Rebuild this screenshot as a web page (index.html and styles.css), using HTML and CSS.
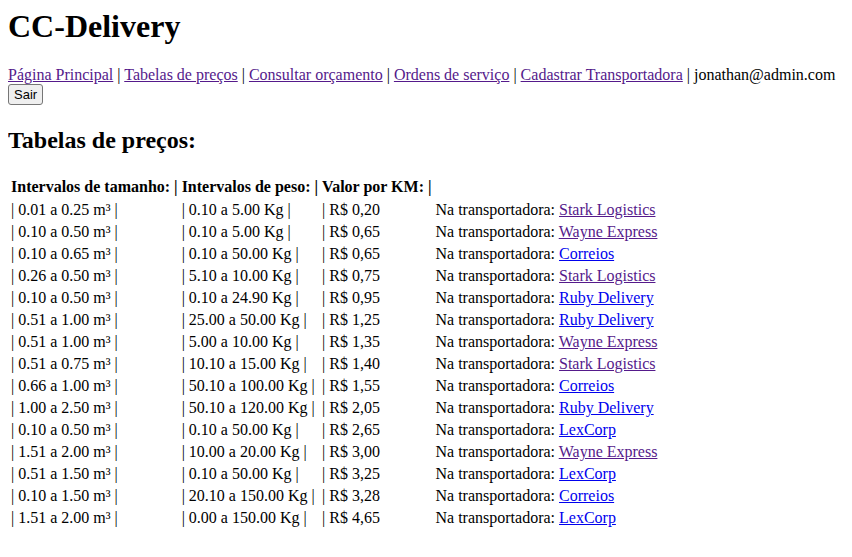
FILE: index.html
```html
<!DOCTYPE html>
<html lang="pt-BR">
<head>
<meta charset="utf-8">
<title>CC-Delivery</title>
<link rel="stylesheet" href="styles.css">
</head>
<body class="page">
<header class="site-header">
  <h1 class="brand">CC-Delivery</h1>
  <nav class="main-nav">
    <a class="link visited" href="#">Página Principal</a> | <a class="link visited" href="#">Tabelas de preços</a> | <a class="link visited" href="#">Consultar orçamento</a> | <a class="link visited" href="#">Ordens de serviço</a> | <a class="link visited" href="#">Cadastrar Transportadora</a> | jonathan@admin.com
  </nav>
  <form class="logout-form">
    <button class="btn-logout" type="button">Sair</button>
  </form>
</header>
<main>
  <h2 class="section-title">Tabelas de preços:</h2>
  <table class="price-table">
    <thead>
      <tr><th>Intervalos de tamanho: |</th><th>Intervalos de peso: |</th><th>Valor por KM: |</th><th></th></tr>
    </thead>
    <tbody>
      <tr><td>| 0.01 a 0.25 m³ |</td><td>| 0.10 a 5.00 Kg |</td><td>| R$ 0,20</td><td>Na transportadora: <a class="link visited" href="#">Stark Logistics</a></td></tr>
      <tr><td>| 0.10 a 0.50 m³ |</td><td>| 0.10 a 5.00 Kg |</td><td>| R$ 0,65</td><td>Na transportadora: <a class="link visited" href="#">Wayne Express</a></td></tr>
      <tr><td>| 0.10 a 0.65 m³ |</td><td>| 0.10 a 50.00 Kg |</td><td>| R$ 0,65</td><td>Na transportadora: <a class="link" href="#">Correios</a></td></tr>
      <tr><td>| 0.26 a 0.50 m³ |</td><td>| 5.10 a 10.00 Kg |</td><td>| R$ 0,75</td><td>Na transportadora: <a class="link visited" href="#">Stark Logistics</a></td></tr>
      <tr><td>| 0.10 a 0.50 m³ |</td><td>| 0.10 a 24.90 Kg |</td><td>| R$ 0,95</td><td>Na transportadora: <a class="link" href="#">Ruby Delivery</a></td></tr>
      <tr><td>| 0.51 a 1.00 m³ |</td><td>| 25.00 a 50.00 Kg |</td><td>| R$ 1,25</td><td>Na transportadora: <a class="link" href="#">Ruby Delivery</a></td></tr>
      <tr><td>| 0.51 a 1.00 m³ |</td><td>| 5.00 a 10.00 Kg |</td><td>| R$ 1,35</td><td>Na transportadora: <a class="link visited" href="#">Wayne Express</a></td></tr>
      <tr><td>| 0.51 a 0.75 m³ |</td><td>| 10.10 a 15.00 Kg |</td><td>| R$ 1,40</td><td>Na transportadora: <a class="link visited" href="#">Stark Logistics</a></td></tr>
      <tr><td>| 0.66 a 1.00 m³ |</td><td>| 50.10 a 100.00 Kg |</td><td>| R$ 1,55</td><td>Na transportadora: <a class="link" href="#">Correios</a></td></tr>
      <tr><td>| 1.00 a 2.50 m³ |</td><td>| 50.10 a 120.00 Kg |</td><td>| R$ 2,05</td><td>Na transportadora: <a class="link" href="#">Ruby Delivery</a></td></tr>
      <tr><td>| 0.10 a 0.50 m³ |</td><td>| 0.10 a 50.00 Kg |</td><td>| R$ 2,65</td><td>Na transportadora: <a class="link" href="#">LexCorp</a></td></tr>
      <tr><td>| 1.51 a 2.00 m³ |</td><td>| 10.00 a 20.00 Kg |</td><td>| R$ 3,00</td><td>Na transportadora: <a class="link visited" href="#">Wayne Express</a></td></tr>
      <tr><td>| 0.51 a 1.50 m³ |</td><td>| 0.10 a 50.00 Kg |</td><td>| R$ 3,25</td><td>Na transportadora: <a class="link" href="#">LexCorp</a></td></tr>
      <tr><td>| 0.10 a 1.50 m³ |</td><td>| 20.10 a 150.00 Kg |</td><td>| R$ 3,28</td><td>Na transportadora: <a class="link" href="#">Correios</a></td></tr>
      <tr><td>| 1.51 a 2.00 m³ |</td><td>| 0.00 a 150.00 Kg |</td><td>| R$ 4,65</td><td>Na transportadora: <a class="link" href="#">LexCorp</a></td></tr>
    </tbody>
  </table>
</main>
</body>
</html>
```
FILE: styles.css
```css
.page {
  margin: 8px;
  font-family: "Liberation Serif", "Times New Roman", serif;
  font-size: 16px;
  color: #000;
  background: #fff;
}
.brand {
  font-size: 32px;
  font-weight: bold;
  margin: 0 0 21.44px;
}
.main-nav {
  display: block;
}
.logout-form {
  margin: 0;
}
.btn-logout {
  box-sizing: border-box;
  height: 21px;
  font-family: "Liberation Sans", Arial, sans-serif;
  font-size: 13px;
  line-height: 15px;
  padding: 2px 5px;
  background: #efefef;
  border: 1px solid #767676;
  border-radius: 3px;
  color: #000;
  vertical-align: top;
}
.section-title {
  font-size: 24px;
  font-weight: bold;
  margin: 22px 0 21px;
}
.link {
  color: #0000ee;
  text-decoration: underline;
}
.link.visited {
  color: #551a8b;
}
.price-table {
  border-collapse: separate;
  border-spacing: 2px;
  font-size: 16px;
}
.price-table th,
.price-table td {
  padding: 1px;
  text-align: left;
  white-space: nowrap;
}
.price-table tbody td {
  padding: 2px 1px 0;
}
.price-table th {
  font-weight: bold;
}
```
